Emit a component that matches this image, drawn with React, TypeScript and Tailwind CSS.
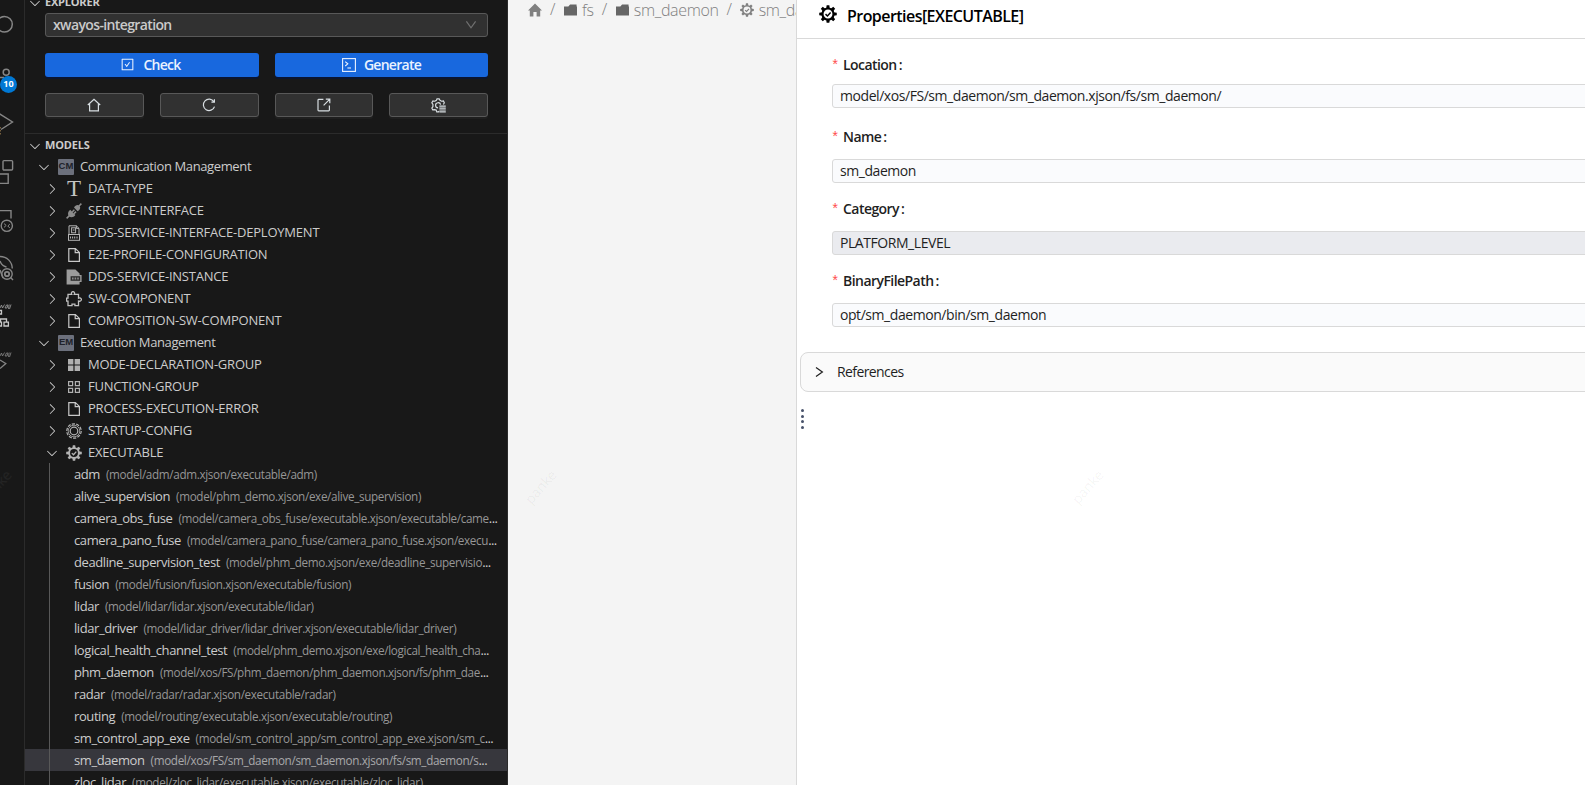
import React from "react";
import { AiOutlineCheckSquare } from "react-icons/ai";
import { VscChevronDown, VscChevronRight } from "react-icons/vsc";

const teeth8 = [0, 45, 90, 135, 180, 225, 270, 315];

function CheckedGear({ className }: { className?: string }) {
  return (
    <svg viewBox="0 0 16 16" className={className} fill="none" stroke="currentColor">
      <circle cx="8" cy="8" r="4.9" strokeWidth="1.9" />
      {teeth8.map((a) => (
        <path key={a} d="M6.4 3 L6.8 0.2 H9.2 L9.6 3 Z" transform={`rotate(${a} 8 8)`} fill="currentColor" stroke="none" />
      ))}
      <path d="M5.8 8.1 L7.5 9.7 L10.3 6.6" strokeWidth="1.3" />
    </svg>
  );
}

function FileIcon() {
  return (
    <svg viewBox="0 0 16 16" className="size-4" fill="none" stroke="#c8c8c8" strokeWidth="1.2">
      <path d="M2.8 1.6 H9.4 L13.4 5.4 V14.4 H2.8 Z M9.2 1.8 V5.6 H13.2" />
    </svg>
  );
}

function ModuleBadge({ label }: { label: string }) {
  return (
    <span className="flex size-4 items-center justify-center rounded-[1px] bg-[#6c707c] font-['Liberation_Sans'] text-[9.5px] font-bold tracking-normal text-[#20222a]">
      {label}
    </span>
  );
}

const typeIcon = (
  <span className="flex size-4 items-center justify-center font-['Liberation_Serif',serif] text-[23px] leading-4 tracking-normal text-[#c4c4c4]">T</span>
);
const plugIcon = (
  <svg viewBox="0 0 16 16" className="size-4" fill="#8b8b8b" stroke="#8b8b8b">
    <path d="M8 4.6 L11.6 8.2 C14 7 15 4.4 13.4 2.7 C11.8 1.2 9.2 2 8 4.6 Z M4.2 6.8 L9.4 12 C7.8 14.4 4.6 14.9 3 13.2 C1.3 11.5 1.8 8.4 4.2 6.8 Z" stroke="none" />
    <path d="M13 3 L15.4 0.6 M3.4 12.6 L0.6 15.4 M6.2 9 L8.4 6.8 M8 10.6 L10 8.6" strokeWidth="1.5" />
  </svg>
);
const deployIcon = (
  <svg viewBox="0 0 16 16" className="size-4" fill="none" stroke="#b4b4b4">
    <path d="M3 9 V0.8 H10.4 L13 3.4 V9 M10.4 0.8 V3.4 H13" />
    <rect x="5.6" y="2.8" width="4" height="5" />
    <path d="M6.8 5 H8.6" />
    <rect x="2.5" y="9.5" width="11" height="5.8" />
    <path d="M4.5 11.4 V13.6 M6.6 11.4 V13.6 M8.7 11.4 V13.6 M11 11.4 V13.6" strokeWidth="1.1" />
  </svg>
);
const instanceIcon = (
  <svg viewBox="0 0 16 16" className="size-4" fill="#9c9c9c">
    <path d="M0.6 0.4 H9.4 L13.6 4.6 V6 H15.6 V13 H13.6 V15.6 H0.6 Z" />
    <rect x="4.6" y="7.2" width="9.6" height="4.6" fill="#2c2c2c" />
    <path d="M6 8.4 h1.6 v2.2 H6 Z M8.6 8.4 h1.6 v2.2 H8.6 Z M11.2 8.4 h1.6 v2.2 h-1.6 Z" fill="#8c8c8c" />
  </svg>
);
const puzzleIcon = (
  <svg viewBox="0 0 16 16" className="size-4" fill="none" stroke="#c0c0c0" strokeWidth="1.3">
    <path d="M2 3.4 H5.7 C4.9 1.9 5.8 0.7 7 0.7 C8.2 0.7 9.1 1.9 8.3 3.4 H12.5 V7.2 C14 6.5 15.4 7.4 15.4 8.6 C15.4 9.8 14 10.7 12.5 10 V14.6 H8.9 V13.2 H6 V14.6 H2 V10.2 H0.6 V7.2 H2 Z" />
  </svg>
);
const gridSolidIcon = (
  <svg viewBox="0 0 16 16" className="size-4" fill="#b0b0b0">
    <path d="M2 2 h5.4 v5.4 H2 Z M8.6 2 H14 v5.4 H8.6 Z M2 8.6 h5.4 V14 H2 Z M8.6 8.6 H14 V14 H8.6 Z" />
  </svg>
);
const gridOutlineIcon = (
  <svg viewBox="0 0 16 16" className="size-4" fill="none" stroke="#b0b0b0" strokeWidth="1.2">
    <path d="M2.6 2.6 h4 v4 h-4 Z M9.4 2.6 h4 v4 h-4 Z M2.6 9.4 h4 v4 h-4 Z M9.4 9.4 h4 v4 h-4 Z" />
  </svg>
);
const startupIcon = (
  <svg viewBox="0 0 16 16" className="size-4" fill="none" stroke="#b4b4b4">
    <circle cx="8" cy="8" r="7.2" strokeWidth="1.2" strokeDasharray="3.2 1.3" />
    <circle cx="8" cy="8" r="5.8" strokeWidth="0.8" />
    <circle cx="8" cy="8" r="3.8" strokeWidth="1.2" />
  </svg>
);

type Node = { level: 1 | 2; open?: boolean; icon: React.ReactNode; label: string };

const nodes: Node[] = [
  { level: 1, open: true, icon: <ModuleBadge label="CM" />, label: "Communication Management" },
  { level: 2, icon: typeIcon, label: "DATA-TYPE" },
  { level: 2, icon: plugIcon, label: "SERVICE-INTERFACE" },
  { level: 2, icon: deployIcon, label: "DDS-SERVICE-INTERFACE-DEPLOYMENT" },
  { level: 2, icon: <FileIcon />, label: "E2E-PROFILE-CONFIGURATION" },
  { level: 2, icon: instanceIcon, label: "DDS-SERVICE-INSTANCE" },
  { level: 2, icon: puzzleIcon, label: "SW-COMPONENT" },
  { level: 2, icon: <FileIcon />, label: "COMPOSITION-SW-COMPONENT" },
  { level: 1, open: true, icon: <ModuleBadge label="EM" />, label: "Execution Management" },
  { level: 2, icon: gridSolidIcon, label: "MODE-DECLARATION-GROUP" },
  { level: 2, icon: gridOutlineIcon, label: "FUNCTION-GROUP" },
  { level: 2, icon: <FileIcon />, label: "PROCESS-EXECUTION-ERROR" },
  { level: 2, icon: startupIcon, label: "STARTUP-CONFIG" },
  { level: 2, open: true, icon: <CheckedGear className="size-4 text-[#b4b4b4]" />, label: "EXECUTABLE" },
];

const executables: { name: string; path: string; cut?: boolean; selected?: boolean }[] = [
  { name: "adm", path: "(model/adm/adm.xjson/executable/adm)" },
  { name: "alive_supervision", path: "(model/phm_demo.xjson/exe/alive_supervision)" },
  { name: "camera_obs_fuse", path: "(model/camera_obs_fuse/executable.xjson/executable/came", cut: true },
  { name: "camera_pano_fuse", path: "(model/camera_pano_fuse/camera_pano_fuse.xjson/execu", cut: true },
  { name: "deadline_supervision_test", path: "(model/phm_demo.xjson/exe/deadline_supervisio", cut: true },
  { name: "fusion", path: "(model/fusion/fusion.xjson/executable/fusion)" },
  { name: "lidar", path: "(model/lidar/lidar.xjson/executable/lidar)" },
  { name: "lidar_driver", path: "(model/lidar_driver/lidar_driver.xjson/executable/lidar_driver)" },
  { name: "logical_health_channel_test", path: "(model/phm_demo.xjson/exe/logical_health_cha", cut: true },
  { name: "phm_daemon", path: "(model/xos/FS/phm_daemon/phm_daemon.xjson/fs/phm_dae", cut: true },
  { name: "radar", path: "(model/radar/radar.xjson/executable/radar)" },
  { name: "routing", path: "(model/routing/executable.xjson/executable/routing)" },
  { name: "sm_control_app_exe", path: "(model/sm_control_app/sm_control_app_exe.xjson/sm_c", cut: true },
  { name: "sm_daemon", path: "(model/xos/FS/sm_daemon/sm_daemon.xjson/fs/sm_daemon/s", cut: true, selected: true },
  { name: "zloc_lidar", path: "(model/zloc_lidar/executable.xjson/executable/zloc_lidar)" },
];

function ActivityBar() {
  return (
    <nav className="relative flex w-[25px] shrink-0 flex-col overflow-hidden border-r border-[#2b2b2b] text-[#868686]">
      <svg viewBox="0 0 24 48" className="h-12 w-6 shrink-0" fill="none" stroke="currentColor" strokeWidth="1.5">
        <circle cx="4.5" cy="24.2" r="7.8" />
      </svg>
      <svg viewBox="0 48 24 50" className="h-[50px] w-6 shrink-0" fill="none" stroke="currentColor" strokeWidth="1.5">
        <circle cx="6.2" cy="72.3" r="3" />
        <path d="M0 77.5 H4" />
      </svg>
      <svg viewBox="0 98 24 48" className="h-12 w-6 shrink-0" fill="none" stroke="currentColor" strokeWidth="1.4">
        <path d="M-1 113.5 L12.5 122 L1 129.5" />
        <path d="M0 127 V136" stroke="#a08050" strokeDasharray="1.5 1.5" />
      </svg>
      <svg viewBox="0 146 24 50" className="h-[50px] w-6 shrink-0" fill="none" stroke="currentColor" strokeWidth="1.4">
        <rect x="3" y="160.6" width="9.6" height="9.4" rx="1" />
        <path d="M0 174 H8.2 V183.4 H0" />
      </svg>
      <svg viewBox="0 196 24 48" className="h-12 w-6 shrink-0" fill="none" stroke="currentColor" strokeWidth="1.4">
        <path d="M0 210.6 H11 V218.5" />
        <circle cx="6.8" cy="225.8" r="5.6" />
        <path d="M4 223.6 L6.2 225.4 L4 227.4 M9.8 224.2 L7.8 226 L9.8 228" strokeWidth="1" />
      </svg>
      <svg viewBox="0 244 24 50" className="h-[50px] w-6 shrink-0" fill="none" stroke="currentColor" strokeWidth="1.4">
        <path d="M0 256.5 C7 256.5 12 261.5 12.3 268.5 M0 261 C1 264 4 266.5 6.5 267 M0 270 L3 278" />
        <circle cx="7" cy="274" r="5.2" />
        <circle cx="7" cy="274" r="2.2" strokeWidth="1.8" />
        <path d="M10.6 277.6 L13 280" />
      </svg>
      <svg viewBox="0 294 24 48" className="h-12 w-6 shrink-0" fill="none" stroke="#c8c8c8" strokeWidth="1.3">
        <path d="M0 308 L1.5 305 L2.5 308 L4.5 304.5 M5 308 L6.5 305 H8 L7 308 H5 M9.2 304.5 L8.5 309 M11 304.5 L9.5 309" strokeWidth="0.8" stroke="#a0a0a0" />
        <path d="M0 310.5 H1.5 V314 H0 M0 319 H6.5 V322 M0.5 319 V322 M4 322.2 H8.4 V326 H4 Z M0 322.2 H1.5 V326 H0" />
      </svg>
      <svg viewBox="0 342 24 48" className="h-12 w-6 shrink-0" fill="none" stroke="currentColor" strokeWidth="1.3">
        <path d="M0 356 L1.5 353 L2.5 356 L4.5 352.5 M5 356 L6.5 353 H8 L7 356 H5 M9.2 352.5 L8.5 357 M11 352.5 L9.5 357" strokeWidth="0.8" />
        <path d="M0 360 L5.8 363.5 L0 368.5" />
      </svg>
      <span className="absolute top-[76px] left-0 flex size-[17px] items-center justify-center rounded-full bg-[#0078d4] pb-px text-[9px] font-bold text-white">10</span>
      <span className="absolute top-[479px] left-[-24px] -rotate-48 text-[14px] leading-4 tracking-[-0.2px] text-white/5">panke</span>
    </nav>
  );
}

function SmallButton({ children, className }: { children: React.ReactNode; className: string }) {
  return (
    <button className={`flex h-6 items-center justify-center rounded-[3px] border border-[#585858] bg-[#313131] pr-[2px] text-[#d8dee2] shadow-[0_2px_0_rgba(255,255,255,0.03)] ${className}`}>
      {children}
    </button>
  );
}

function Explorer() {
  return (
    <aside className="flex w-[483px] shrink-0 flex-col overflow-hidden border-r border-[#2b2b2b] text-[#cccccc]">
      <section className="h-[133px] shrink-0">
        <div className="-mt-[9px] flex h-[22px] items-center gap-[2px] pt-px pl-[2px] text-[11px] font-bold tracking-[-0.2px]">
          <VscChevronDown className="size-4" />
          EXPLORER
        </div>
        <div className="ml-5 flex w-[443px] flex-col">
          <div className="flex h-6 items-center justify-between rounded-[3px] border border-[#585858] bg-[#313131] pr-[10px] pl-[7px] text-[14px] font-semibold tracking-[-0.62px] text-[#cacaca]">
            <span className="-translate-y-px">xwayos-integration</span>
            <svg viewBox="0 0 12 12" className="size-3" fill="none" stroke="#707070" strokeWidth="1.2">
              <path d="M1.4 2.4 L6 8.8 L10.6 2.4" />
            </svg>
          </div>
          <div className="mt-4 flex h-6 gap-4 text-[14px] font-semibold tracking-[-0.72px] text-[#eaf2ff]">
            <button className="flex w-[214px] items-center justify-center gap-2 rounded-[3px] bg-[#1868de] pr-[3px] pb-px shadow-[0_2px_0_#0b1530]">
              <AiOutlineCheckSquare className="size-[15px]" />
              Check
            </button>
            <button className="flex w-[213px] items-center justify-center gap-2 rounded-[3px] bg-[#1868de] pb-px shadow-[0_2px_0_#0b1530]">
              <svg viewBox="0 0 14 14" className="size-[14px]" fill="none" stroke="currentColor" strokeWidth="1.1">
                <rect x="0.6" y="0.6" width="12.8" height="12.8" />
                <path d="M3.2 3.6 L5.8 5.8 L3.2 8" />
                <path d="M5.4 10 H9" />
              </svg>
              Generate
            </button>
          </div>
          <div className="mt-4 flex h-6 gap-4">
            <SmallButton className="w-[99px]">
              <svg viewBox="0 0 14 14" className="size-[14px]" fill="none" stroke="currentColor" strokeWidth="1.2">
                <path d="M0.8 7 L7 1.2 L13.2 7 M2.6 5.6 V12.8 H11.4 V5.6" />
              </svg>
            </SmallButton>
            <SmallButton className="w-[99px]">
              <svg viewBox="0 0 14 14" className="size-[14px]" fill="none" stroke="currentColor" strokeWidth="1.2">
                <path d="M11.9 3.8 A5.7 5.7 0 1 0 12.5 8.6 M12.4 1.2 V4.2 H9.4" />
              </svg>
            </SmallButton>
            <SmallButton className="w-[98px]">
              <svg viewBox="0 0 14 14" className="ml-px size-[14px]" fill="none" stroke="currentColor" strokeWidth="1.2">
                <path d="M6.4 1.4 H1.8 Q1 1.4 1 2.2 V12 Q1 12.8 1.8 12.8 H11.6 Q12.4 12.8 12.4 12 V7.6 M8.8 1.2 H12.8 V5.2 M12.6 1.4 L6.6 7.4" />
              </svg>
            </SmallButton>
            <SmallButton className="w-[99px]">
              <svg viewBox="0 0 14 14" className="ml-[2px] size-[15px]" fill="none" stroke="currentColor" strokeWidth="1.1">
                <path d="M7.4 12.2 L7 13 H5.4 L4.8 11.2 L3.2 10.9 L1.6 11 L0.8 9.4 L1.8 8 V6 L0.8 4.4 L1.8 2.8 L3.6 3 L5 2.2 L5.6 0.8 H7.6 L8.4 2.2 L9.8 3 L11.6 2.8 L12.4 4.4 L11.6 6" />
                <path d="M6.6 9.2 A2.4 2.4 0 1 1 9 6.2" />
                <path d="M7.8 7.6 H13.8 M7.8 9.4 H13.8 M7.8 11.2 H13.8 M7.8 13 H13.8" />
              </svg>
            </SmallButton>
          </div>
        </div>
      </section>
      <section className="flex shrink-0 flex-col border-t border-[#2b2b2b]">
        <div className="flex h-[21px] shrink-0 items-center gap-[2px] pt-[2px] pl-[2px] text-[11px] font-bold tracking-[-0.2px]">
          <VscChevronDown className="size-4" />
          MODELS
        </div>
        {nodes.map((n) => (
          <div
            key={n.label}
            className={`flex h-[22px] shrink-0 items-center gap-[6px] pt-px text-[13px] whitespace-nowrap ${n.level === 1 ? "pl-[11px] tracking-[-0.38px]" : "pl-[19px] tracking-[-0.22px]"}`}
          >
            {n.open ? <VscChevronDown className="size-4 shrink-0" /> : <VscChevronRight className="size-4 shrink-0" />}
            {n.icon}
            <span>{n.label}</span>
          </div>
        ))}
        <div className="relative text-[13px] tracking-[-0.41px]">
          {executables.map((e) => (
            <div key={e.name} className={`flex h-[22px] items-center pt-px pl-[49px] whitespace-nowrap ${e.selected ? "bg-[#37373d]" : ""}`}>
              <span>{e.name}</span>
              <span className={`ml-[6px] text-[11.7px] tracking-[-0.34px] ${e.selected ? "text-[#a8a8aa]" : "text-[#969696]"}`}>{e.path}</span>
              {e.cut && <span className="tracking-[-0.6px]">...</span>}
            </div>
          ))}
          <div className="absolute inset-y-0 left-6 w-px bg-[#585858]" />
        </div>
      </section>
    </aside>
  );
}

function Folder() {
  return (
    <svg viewBox="0 0 12 12" className="h-3 w-[13px] shrink-0" fill="#666666" preserveAspectRatio="none">
      <path d="M0 2.4 H4 L5.6 0.6 H11.6 V2.4 H12 V11.4 H0 Z" />
    </svg>
  );
}

function Canvas() {
  return (
    <main className="relative w-[288px] shrink-0 overflow-hidden bg-[#f4f4f4]">
      <div className="flex h-5 items-center pl-5 text-[16px] leading-5 font-light tracking-[-0.35px] whitespace-nowrap text-[#808080]">
        <svg viewBox="0 0 14 14" className="size-[14px] shrink-0" fill="#808080">
          <path d="M7 0.6 L14 7.6 H12.2 V13.6 H8.6 V9 H5.4 V13.6 H1.8 V7.6 H0 Z" />
        </svg>
        <span className="ml-2 -translate-y-px">/</span>
        <span className="ml-[9px] flex items-center gap-[5px]"><Folder />fs</span>
        <span className="ml-2 -translate-y-px">/</span>
        <span className="ml-[9px] flex items-center gap-[5px]"><Folder />sm_daemon</span>
        <span className="ml-2 -translate-y-px">/</span>
        <span className="ml-[8px] flex items-center gap-[5px]"><CheckedGear className="size-[14px] shrink-0" />sm_daemon</span>
      </div>
      <span className="absolute top-[479px] left-[13px] -rotate-48 text-[14px] leading-4 tracking-[-0.2px] text-black/5">panke</span>
    </main>
  );
}

const fields = [
  { label: "Location", value: "model/xos/FS/sm_daemon/sm_daemon.xjson/fs/sm_daemon/", gap: "pt-[8px]", box: "bg-[#fafbfd]" },
  { label: "Name", value: "sm_daemon", gap: "pt-[11px]", box: "bg-[#fafbfd]" },
  { label: "Category", value: "PLATFORM_LEVEL", gap: "pt-[11px]", box: "bg-[#eaebef]" },
  { label: "BinaryFilePath", value: "opt/sm_daemon/bin/sm_daemon", gap: "pt-[11px]", box: "bg-[#fafbfd]" },
];

function Properties() {
  return (
    <section className="relative flex min-w-0 flex-1 flex-col overflow-hidden border-l border-[#d9d9d9] bg-white text-[#1f1f1f]">
      <header className="flex h-[39px] shrink-0 items-center gap-[10px] border-b border-[#d9d9d9] pb-2 pl-[22px] text-[16px] font-semibold tracking-[-0.55px] text-black">
        <CheckedGear className="size-[18px] -translate-y-px" />
        <h1 className="translate-y-px">Properties[EXECUTABLE]</h1>
      </header>
      <div className="flex h-[313px] shrink-0 flex-col pt-[13px] pl-[35px] text-[14px]">
        {fields.map((f) => (
          <div key={f.label} className="h-[72px]">
            <div className="flex h-6 items-center">
              <span className="-ml-px w-3 pt-[3px] font-['Liberation_Mono'] text-[14px] leading-4 text-[#ff4d4f]">*</span>
              <span className="font-semibold tracking-[-0.55px]">{f.label}</span>
              <span className="ml-[2px] font-semibold">:</span>
            </div>
            <div className={f.gap}>
              <div className={`flex h-6 w-[780px] items-center rounded-[3px] border border-[#d9d9d9] pb-px pl-[7px] tracking-[-0.44px] whitespace-nowrap ${f.box}`}>{f.value}</div>
            </div>
          </div>
        ))}
      </div>
      <div className="ml-[3px] flex h-10 w-[820px] shrink-0 items-center gap-[13px] rounded-lg border border-[#d9d9d9] bg-[#fafafa] pl-[13px] text-[14px] tracking-[-0.6px]">
        <svg viewBox="0 0 10 12" className="h-3 w-[10px]" fill="none" stroke="#1f1f1f" strokeWidth="1.2">
          <path d="M2 1.4 L8.4 6 L2 10.6" />
        </svg>
        <span className="-translate-y-px">References</span>
      </div>
      <div className="mt-[17px] ml-[3.5px] flex flex-col gap-[2.7px]">
        {[0, 1, 2, 3].map((d) => (
          <span key={d} className="size-[3px] rounded-full bg-[#47526a]" />
        ))}
      </div>
      <span className="absolute top-[479px] left-[271px] -rotate-48 text-[14px] leading-4 tracking-[-0.2px] text-black/5">panke</span>
    </section>
  );
}

export default function App() {
  return (
    <div className="flex h-[785px] w-[1585px] overflow-hidden bg-[#181818] font-['Open_Sans','Noto_Sans',sans-serif]">
      <ActivityBar />
      <Explorer />
      <Canvas />
      <Properties />
    </div>
  );
}
